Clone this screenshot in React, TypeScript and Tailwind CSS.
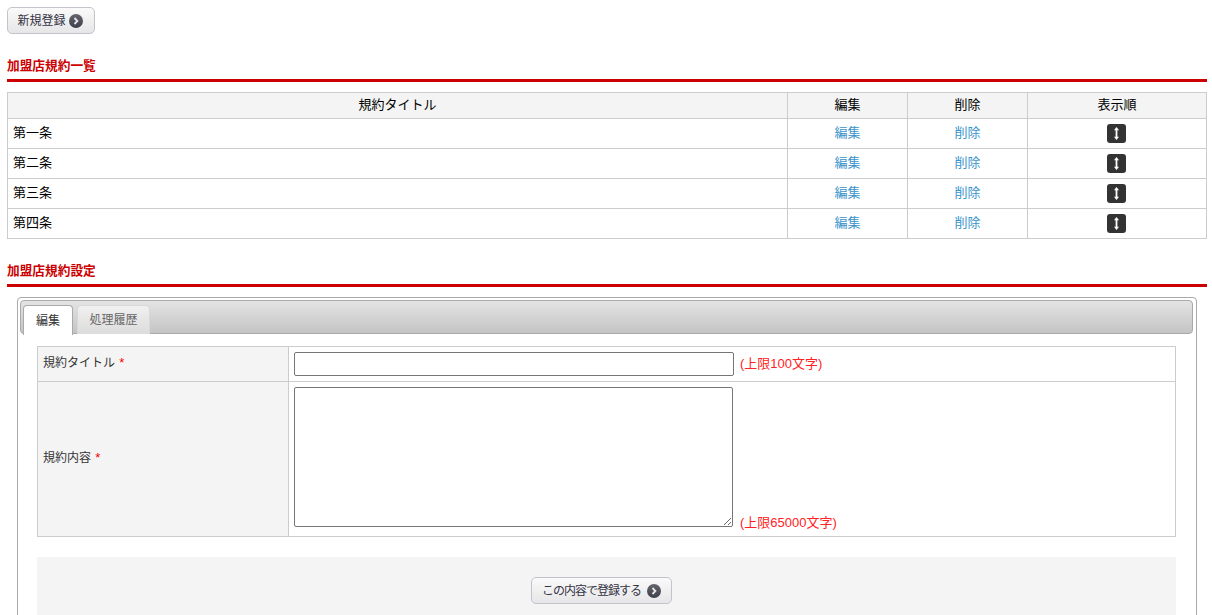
const font = "font-['Liberation_Sans','Noto_Sans_CJK_JP',sans-serif]";

const rows = ["第一条", "第二条", "第三条", "第四条"];

function ArrowCircle() {
  return (
    <svg width="14" height="14" viewBox="0 0 14 14" className="shrink-0">
      <defs>
        <linearGradient id="circ" x1="0" y1="0" x2="0" y2="1">
          <stop offset="0" stopColor="#65656f" />
          <stop offset="1" stopColor="#3f3f4a" />
        </linearGradient>
      </defs>
      <circle cx="7" cy="7" r="7" fill="url(#circ)" />
      <path d="M5.5 4 8.4 7 5.5 10" fill="none" stroke="#e8e8e8" strokeWidth="1.8" />
    </svg>
  );
}

function Btn({ label, className }: { label: string; className: string }) {
  return (
    <button
      className={`flex h-[27px] items-center justify-center rounded-[5px] border border-[#c3c3cc] bg-gradient-to-b from-[#fafafa] to-[#e6e6e8] text-[12px] text-[#333344] ${className}`}
    >
      {label}
      <ArrowCircle />
    </button>
  );
}

function SortIcon() {
  return (
    <span className="mr-[2px] inline-flex h-[19px] w-[19px] items-center justify-center rounded-[3px] bg-[#333333] align-middle">
      <svg width="9" height="15" viewBox="0 0 9 15">
        <path d="M4.5 1 7 4.2H5.4V10.8H7L4.5 14 2 10.8H3.6V4.2H2Z" fill="#fff" />
      </svg>
    </span>
  );
}

function Heading({ children }: { children: string }) {
  return (
    <h2 className="h-[25px] border-b-[3px] border-[#cc0000] pt-[1px] text-[12.7px] leading-[16px] font-bold text-[#cc0000]">
      {children}
    </h2>
  );
}

export default function App() {
  return (
    <div className={`h-[615px] w-[1212px] overflow-hidden bg-white text-[13px] text-black ${font}`}>
      <div className="ml-[7px] w-[1200px] pt-[7px]">
        <Btn label="新規登録" className="w-[88px] gap-[3px] pr-[2px]" />

        <div className="mt-[23px]">
          <Heading>加盟店規約一覧</Heading>
        </div>

        <table className="mt-[10px] w-[1200px] table-fixed border-collapse border border-[#cccccc]">
          <colgroup>
            <col className="w-[780px]" />
            <col className="w-[120px]" />
            <col className="w-[120px]" />
            <col />
          </colgroup>
          <thead>
            <tr className="h-[26px] bg-[#f3f4f3] leading-[18px]">
              <th className="border border-[#cccccc] pb-[2px] font-normal">規約タイトル</th>
              <th className="border border-[#cccccc] pb-[2px] font-normal">編集</th>
              <th className="border border-[#cccccc] pb-[2px] font-normal">削除</th>
              <th className="border border-[#cccccc] pb-[2px] font-normal">表示順</th>
            </tr>
          </thead>
          <tbody>
            {rows.map((r) => (
              <tr key={r} className="h-[30px]">
                <td className="border border-[#cccccc] px-[5px] pb-[2px]">{r}</td>
                <td className="border border-[#cccccc] pb-[2px] text-center text-[#3a94cc]">編集</td>
                <td className="border border-[#cccccc] pb-[2px] text-center text-[#3a94cc]">削除</td>
                <td className="border border-[#cccccc] pb-[2px] text-center">
                  <SortIcon />
                </td>
              </tr>
            ))}
          </tbody>
        </table>

        <div className="mt-[23px]">
          <Heading>加盟店規約設定</Heading>
        </div>

        <div className="mt-[10px] ml-[10px] h-[400px] w-[1180px] rounded-[4px] border border-[#aaaaaa] p-[2px]">
          <div className="mr-[1px] flex h-[34px] gap-[4px] rounded-[4px] border border-[#aaaaaa] bg-gradient-to-b from-[#e4e4e4] to-[#c4c4c4] pt-[4px] pl-[2px]">
            <div className="-mb-px flex h-[30px] w-[50px] items-center justify-center rounded-t-[4px] border border-b-0 border-[#aaaaaa] bg-white text-[12px] text-[#333333]">
              編集
            </div>
            <div className="flex h-[29px] w-[73px] items-center justify-center rounded-t-[4px] border border-b-0 border-[#d8d8d8] bg-gradient-to-b from-[#f0f0f0] to-[#dcdcdc] text-[12px] text-[#666666]">
              処理履歴
            </div>
          </div>

          <div className="px-[17px] pt-[12px]">
            <table className="w-[1139px] table-fixed border-collapse border border-[#cccccc]">
              <colgroup>
                <col className="w-[251px]" />
                <col />
              </colgroup>
              <tbody>
                <tr className="h-[35px]">
                  <th className="border border-[#cccccc] bg-[#f3f4f3] px-[5px] pb-[2px] text-left text-[12px] font-normal text-[#333333]">
                    規約タイトル <span className="ml-[1px] text-[13px] text-[#ff0000]">*</span>
                  </th>
                  <td className="border border-[#cccccc] px-[5px]">
                    <div className="flex items-center">
                      <input
                        type="text"
                        className="h-[24px] w-[440px] rounded-[2px] border border-[#767676] bg-white"
                      />
                      <span className="ml-[6px] text-[#ff2222]">(上限100文字)</span>
                    </div>
                  </td>
                </tr>
                <tr className="h-[155px]">
                  <th className="border border-[#cccccc] bg-[#f3f4f3] px-[5px] pb-[2px] text-left text-[12px] font-normal text-[#333333]">
                    規約内容 <span className="ml-[1px] text-[13px] text-[#ff0000]">*</span>
                  </th>
                  <td className="border border-[#cccccc] px-[5px] pt-[5px] pb-[9px]">
                    <div className="flex items-end">
                      <textarea className="block h-[140px] w-[439px] rounded-[2px] border border-[#767676] bg-white" />
                      <span className="-mb-[4px] ml-[7px] leading-[17px] text-[#ff2222]">(上限65000文字)</span>
                    </div>
                  </td>
                </tr>
              </tbody>
            </table>

            <div className="mt-[20px] flex h-[100px] w-[1139px] justify-center bg-[#f4f4f4] pt-[20px] pr-[10px]">
              <Btn label="この内容で登録する" className="w-[141px] gap-[6px] tracking-[-1px]" />
            </div>
          </div>
        </div>
      </div>
    </div>
  );
}
